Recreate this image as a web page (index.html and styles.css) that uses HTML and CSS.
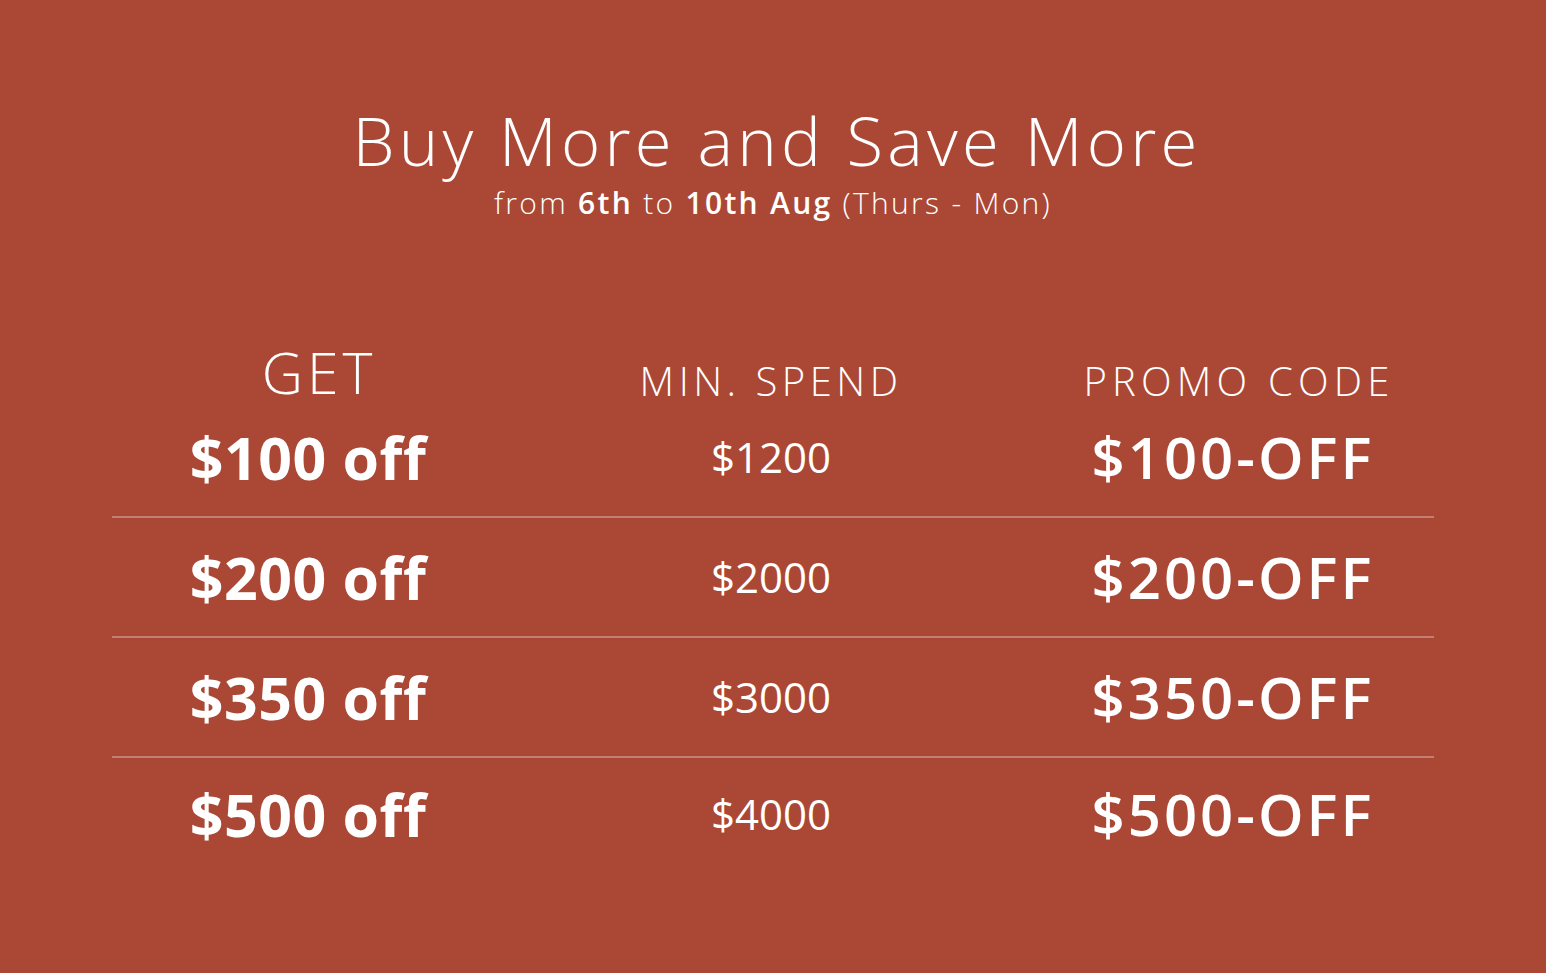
FILE: index.html
```html
<!DOCTYPE html>
<html lang="en">
<head>
    <meta charset="UTF-8">
    <meta name="viewport" content="width=device-width, initial-scale=1.0">
    <title>Buy More and Save More</title>
    <link rel="stylesheet" href="styles.css">
</head>
<body>
    <!-- Promo Banner -->
    <section class="promo">
        <div class="promo-title">
            <h1>Buy More and Save More</h1>
            <p>from <strong>6th</strong> to <strong>10th Aug</strong> (Thurs - Mon)</p>
        </div>

        <!-- Discount Table -->
        <div class="promo-table">
            <div class="row head">
                <div class="cell get">GET</div>
                <div class="cell spend">MIN. SPEND</div>
                <div class="cell code">PROMO CODE</div>
            </div>
            <div class="row">
                <div class="cell get">$100 off</div>
                <div class="cell spend">$1200</div>
                <div class="cell code">$100-OFF</div>
            </div>
            <div class="row">
                <div class="cell get">$200 off</div>
                <div class="cell spend">$2000</div>
                <div class="cell code">$200-OFF</div>
            </div>
            <div class="row">
                <div class="cell get">$350 off</div>
                <div class="cell spend">$3000</div>
                <div class="cell code">$350-OFF</div>
            </div>
            <div class="row">
                <div class="cell get">$500 off</div>
                <div class="cell spend">$4000</div>
                <div class="cell code">$500-OFF</div>
            </div>
        </div>
    </section>
</body>
</html>
```

FILE: styles.css
```css
/* General Reset */
* {
    margin: 0;
    padding: 0;
    box-sizing: border-box;
    font-family: "Open Sans", Lato, sans-serif;
}

body {
    background-color: #aa4835;
    color: #fff;
    width: 1546px;
    height: 973px;
    overflow: hidden;
}

/* Title */
.promo-title {
    padding-top: 100px;
    text-align: center;
}

.promo-title h1 {
    font-size: 67px;
    font-weight: 300;
    line-height: 80px;
    letter-spacing: 4.2px;
    padding-left: 8px;
}

.promo-title p {
    margin-top: 6px;
    font-size: 30px;
    font-weight: 300;
    line-height: 34px;
    letter-spacing: 2.3px;
}

.promo-title strong {
    font-weight: 600;
}

/* Table */
.promo-table {
    margin: 118px 112px 0;
}

.row {
    display: grid;
    grid-template-columns: 392px 534px 396px;
    align-items: center;
    height: 120px;
    border-bottom: 2px solid rgba(255, 255, 255, 0.3);
}

.row:last-child {
    border-bottom: none;
    padding-bottom: 8px;
}

.row.head {
    height: 60px;
    align-items: end;
    border-bottom: none;
}

.cell {
    text-align: center;
    line-height: 1;
}

.head .cell {
    font-weight: 300;
    font-size: 40px;
    letter-spacing: 4.5px;
    margin-bottom: -3px;
}

.head .get {
    font-size: 57px;
    letter-spacing: 4px;
    padding-left: 22px;
}

.head .code {
    letter-spacing: 5.2px;
    padding-left: 6px;
    padding-right: 0;
}

.get {
    font-size: 59px;
    font-weight: 700;
    letter-spacing: 0.5px;
}

.spend {
    font-size: 42px;
    font-weight: 400;
}

.code {
    font-size: 58px;
    font-weight: 600;
    letter-spacing: 3px;
    padding-right: 6px;
}
```
